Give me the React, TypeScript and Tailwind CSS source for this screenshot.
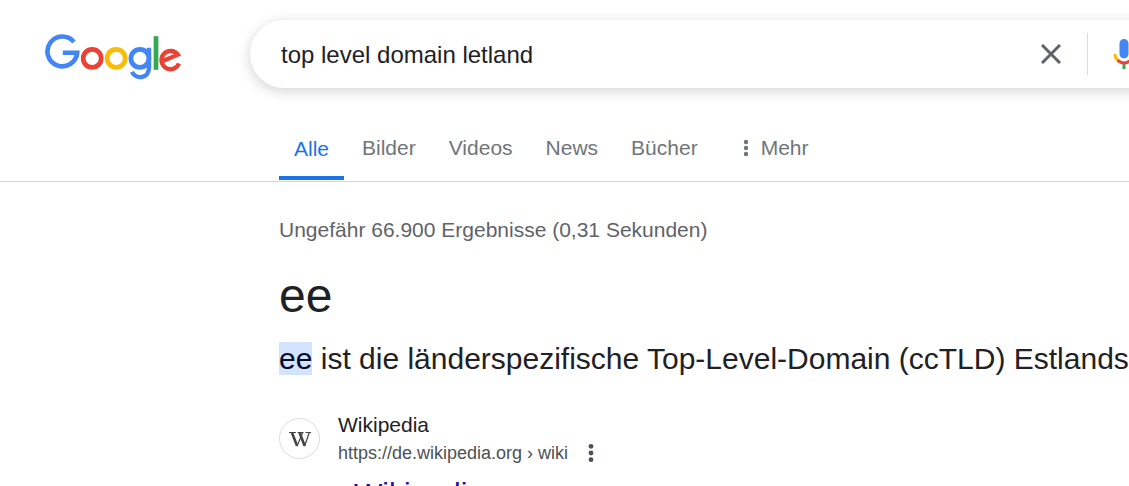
import React, { useState } from 'react';

const tabs = ['Bilder', 'Videos', 'News', 'Bücher'];

const GoogleLogo = () => (
  <svg width="138" height="46" viewBox="45 34 138 46" fill="none" strokeWidth="4.7" role="img" aria-label="Google">
    <path d="M73.9 42A14.9 14.9 0 1 0 77.2 52.8H62.8" stroke="#4285f4" strokeWidth="4.6" />
    <circle cx="92.2" cy="58.4" r="9" stroke="#ea4335" />
    <circle cx="116.2" cy="58.4" r="9" stroke="#fbbc05" />
    <circle cx="139.9" cy="58.4" r="9" stroke="#4285f4" />
    <path d="M149 47.8V67.5C149 79.5 135.5 79.5 132 71.8" stroke="#4285f4" strokeWidth="4.4" />
    <path d="M156 36.2V69.8" stroke="#34a853" />
    <path d="M179 63.5A9.1 9.1 0 1 1 177.8 54.6L163.4 60.8" stroke="#ea4335" strokeWidth="4.3" />
  </svg>
);

const MicIcon = () => (
  <svg width="36" height="36" viewBox="0 0 24 24" aria-hidden="true">
    <path fill="#4285f4" d="m12 15c1.66 0 3-1.31 3-2.97v-7.02c0-1.66-1.34-3.01-3-3.01s-3 1.34-3 3.01v7.02c0 1.66 1.34 2.97 3 2.97z" />
    <path fill="#34a853" d="m11 18.08h2v3.92h-2z" />
    <path fill="#fbbc05" d="m7.05 16.87c-1.27-1.33-2.05-2.83-2.05-4.87h2c0 1.45 0.56 2.42 1.47 3.38v0.32l-1.15 1.18z" />
    <path fill="#ea4335" d="m12 16.93a4.97 5.25 0 0 1-3.54-1.55l-1.41 1.49c1.26 1.34 3.02 2.13 4.95 2.13 3.87 0 6.99-2.92 6.99-7h-1.99c0 2.92-2.24 4.93-5.01 4.93z" />
  </svg>
);

const WikipediaIcon = () => (
  <svg width="24" height="20" viewBox="0 0 24 20" aria-hidden="true">
    <g fill="none" stroke="#444">
      <path d="M1 4.5h7M9.5 4.5h6M17.5 4.5H23" strokeWidth="1.2" />
      <path d="M4 4.7 9 17.7M11.6 4.7 16.6 17.7" strokeWidth="2.6" />
      <path d="M9 18.3 14.6 4.7M16.6 18.3 21.2 4.7" strokeWidth="1.2" />
    </g>
  </svg>
);

const Header = () => {
  const [query, setQuery] = useState('top level domain letland');

  return (
    <header className="flex items-start pt-5 pl-[45px]">
      <a href="#" className="mt-[14px] mr-[67px] shrink-0">
        <GoogleLogo />
      </a>
      {/* The pill runs on past the right edge of the window */}
      <form
        role="search"
        onSubmit={(e) => e.preventDefault()}
        className="-mr-24 flex h-[68px] flex-1 items-center rounded-full bg-white pr-[83px] pl-[31px] shadow-[0_3px_12px_1px_rgba(64,60,67,0.2)]"
      >
        <input
          type="text"
          aria-label="Suche"
          value={query}
          onChange={(e) => setQuery(e.target.value)}
          className="min-w-0 flex-1 bg-transparent pt-[2px] text-2xl text-[#202124] outline-none"
        />
        <button type="button" aria-label="Löschen" onClick={() => setQuery('')} className="mr-[18px] p-2">
          <svg width="20" height="20" viewBox="0 0 20 20" stroke="#5f6368" strokeWidth="3" aria-hidden="true">
            <path d="M1 1l18 18M19 1L1 19" />
          </svg>
        </button>
        <div className="mr-[18px] h-[42px] w-px bg-[#dadce0]" />
        <button type="button" aria-label="Sprachsuche" className="shrink-0">
          <MicIcon />
        </button>
      </form>
    </header>
  );
};

const Tabs = () => (
  <nav className="mt-7 flex h-[66px] items-stretch gap-[3px] border-b border-[#d2d3d6] pl-[279px] text-[21px] leading-6 text-[#70757a]">
    <a href="#" aria-current="page" className="mb-px flex items-center border-b-4 border-[#1a73e8] px-[15px] pt-[5px] text-[#1a73e8]">
      Alle
    </a>
    {tabs.map((tab) => (
      <a key={tab} href="#" className="flex items-center px-[15px] pb-[2px]">
        {tab}
      </a>
    ))}
    <button type="button" className="ml-3 flex items-center gap-3 px-[15px] pb-[2px]">
      <svg width="6" height="18" viewBox="0 0 6 18" fill="#70757a" aria-hidden="true">
        <circle cx="3" cy="3" r="2.2" />
        <circle cx="3" cy="9" r="2.2" />
        <circle cx="3" cy="15" r="2.2" />
      </svg>
      Mehr
    </button>
  </nav>
);

const Results = () => (
  <main className="pl-[279px]">
    <p className="mt-9 text-[21px] leading-6 text-[#5f6368]">Ungefähr 66.900 Ergebnisse (0,31 Sekunden)</p>
    <h1 className="mt-6 text-5xl leading-[60px] text-[#202124]">ee</h1>
    <p className="mt-4 text-3xl leading-[34px] whitespace-nowrap text-[#202124]">
      <mark className="bg-[#d3e3fd] text-[#040c28]">ee</mark> ist die länderspezifische Top-Level-Domain (ccTLD) Estlands
    </p>
    <article className="mt-[35px]">
      <div className="flex items-center gap-[18px]">
        <span className="mb-[2px] flex size-[41px] items-center justify-center rounded-full border border-[#dadce0]">
          <WikipediaIcon />
        </span>
        <div>
          <p className="text-[21px] leading-7 text-[#202124]">Wikipedia</p>
          <div className="flex items-center gap-5 text-[18px] leading-7 text-[#4d5156]">
            <cite className="not-italic">https://de.wikipedia.org › wiki</cite>
            <button type="button" aria-label="Über dieses Ergebnis">
              <svg width="6" height="20" viewBox="0 0 6 20" fill="#4d5156" aria-hidden="true">
                <circle cx="3" cy="3.3" r="2.4" />
                <circle cx="3" cy="10" r="2.4" />
                <circle cx="3" cy="16.7" r="2.4" />
              </svg>
            </button>
          </div>
        </div>
      </div>
      <h2 className="mt-[7px] text-3xl leading-10 text-[#1a0dab]">
        <a href="#">.ee – Wikipedia</a>
      </h2>
    </article>
  </main>
);

const App = () => (
  <div className="h-screen overflow-hidden bg-white font-['Liberation_Sans',Arial,sans-serif]">
    <Header />
    <Tabs />
    <Results />
  </div>
);

export default App;
